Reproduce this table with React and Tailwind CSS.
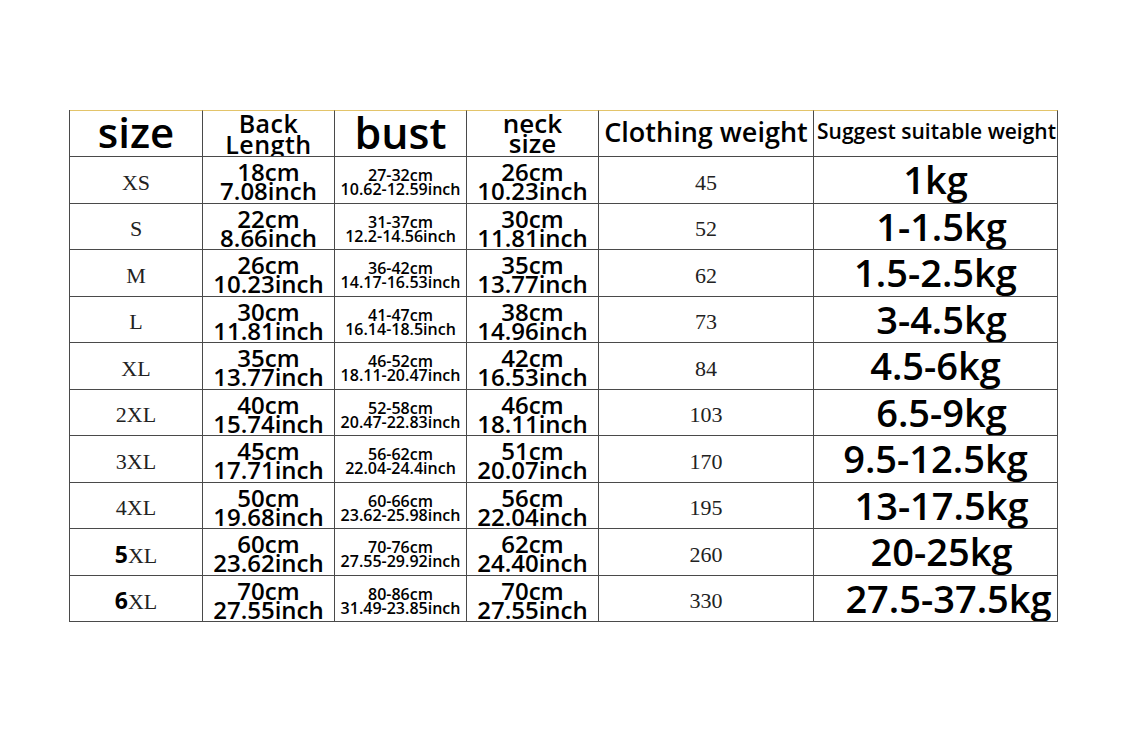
import React from "react";

const sans = "font-['Open_Sans','Noto_Sans',sans-serif]";
const serif = "font-['Liberation_Serif','DejaVu_Serif',serif]";

const rows = [
  { size: "XS", back: ["18cm", "7.08inch"], bust: ["27-32cm", "10.62-12.59inch"], neck: ["26cm", "10.23inch"], cw: "45", sw: "1kg", shift: "" },
  { size: "S", back: ["22cm", "8.66inch"], bust: ["31-37cm", "12.2-14.56inch"], neck: ["30cm", "11.81inch"], cw: "52", sw: "1-1.5kg", shift: "pl-[12px]" },
  { size: "M", back: ["26cm", "10.23inch"], bust: ["36-42cm", "14.17-16.53inch"], neck: ["35cm", "13.77inch"], cw: "62", sw: "1.5-2.5kg", shift: "" },
  { size: "L", back: ["30cm", "11.81inch"], bust: ["41-47cm", "16.14-18.5inch"], neck: ["38cm", "14.96inch"], cw: "73", sw: "3-4.5kg", shift: "pl-[12px]" },
  { size: "XL", back: ["35cm", "13.77inch"], bust: ["46-52cm", "18.11-20.47inch"], neck: ["42cm", "16.53inch"], cw: "84", sw: "4.5-6kg", shift: "" },
  { size: "2XL", back: ["40cm", "15.74inch"], bust: ["52-58cm", "20.47-22.83inch"], neck: ["46cm", "18.11inch"], cw: "103", sw: "6.5-9kg", shift: "pl-[12px]" },
  { size: "3XL", back: ["45cm", "17.71inch"], bust: ["56-62cm", "22.04-24.4inch"], neck: ["51cm", "20.07inch"], cw: "170", sw: "9.5-12.5kg", shift: "" },
  { size: "4XL", back: ["50cm", "19.68inch"], bust: ["60-66cm", "23.62-25.98inch"], neck: ["56cm", "22.04inch"], cw: "195", sw: "13-17.5kg", shift: "pl-[12px]" },
  { size: "5XL", back: ["60cm", "23.62inch"], bust: ["70-76cm", "27.55-29.92inch"], neck: ["62cm", "24.40inch"], cw: "260", sw: "20-25kg", shift: "pl-[12px]", bold: "5" },
  { size: "6XL", back: ["70cm", "27.55inch"], bust: ["80-86cm", "31.49-23.85inch"], neck: ["70cm", "27.55inch"], cw: "330", sw: "27.5-37.5kg", shift: "pl-[26px]", bold: "6" },
];

const cell = "flex flex-col items-center justify-center border-r border-b border-[#4a4a4a] overflow-hidden whitespace-nowrap";
const head = `${cell} h-[47px] border-t border-t-[#e3c46a] ${sans} text-black font-semibold`;

const Two = ({ a, b, small, h }) => (
  <div
    className={`${cell} ${h} ${sans} text-black font-semibold ${small ? "text-[16px] leading-[14px] pt-[4px]" : "text-[24px] leading-[19px] pt-[2px]"}`}
  >
    <span>{a}</span>
    <span>{b}</span>
  </div>
);

export default function App() {
  return (
    <div className="w-full h-[739px] bg-white pt-[110px] pl-[69px]">
      <div className="grid grid-cols-[133px_132px_132px_132px_215px_244px] w-[988px] border-l border-[#4a4a4a]">
        {/* header */}
        <div className={`${head} text-[42px] leading-none pb-[3px]`}>size</div>
        <div className={`${head} text-[25px] leading-[21px] tracking-[0.5px]`}>
          <span>Back</span>
          <span>Length</span>
        </div>
        <div className={`${head} text-[43px] leading-none pb-[3px]`}>bust</div>
        <div className={`${head} text-[26px] leading-[20px] pb-[2px]`}>
          <span>neck</span>
          <span>size</span>
        </div>
        <div className={`${head} text-[27px] leading-none pb-[4px]`}>Clothing weight</div>
        <div className={`${head} text-[21px] leading-none pb-[4px] items-end pr-[1px]`}>Suggest suitable weight</div>

        {rows.map((r, i) => {
          const h = i % 2 === 0 ? "h-[47px]" : "h-[46px]";
          return (
            <React.Fragment key={r.size}>
              <div className={`${cell} ${h} ${serif} flex-row pt-[4px] text-[22px] text-[#222]`}>
                {r.bold ? (
                  <span>
                    <span className={`${sans} font-bold text-black text-[23px]`}>{r.bold}</span>
                    XL
                  </span>
                ) : (
                  r.size
                )}
              </div>
              <Two a={r.back[0]} b={r.back[1]} h={h} />
              <Two a={r.bust[0]} b={r.bust[1]} h={h} small />
              <Two a={r.neck[0]} b={r.neck[1]} h={h} />
              <div className={`${cell} ${h} ${serif} pt-[4px] text-[22px] text-[#222]`}>{r.cw}</div>
              <div className={`${cell} ${h} ${sans} ${r.shift} text-[38px] leading-none font-semibold text-black pb-[2px]`}>{r.sw}</div>
            </React.Fragment>
          );
        })}
      </div>
    </div>
  );
}
